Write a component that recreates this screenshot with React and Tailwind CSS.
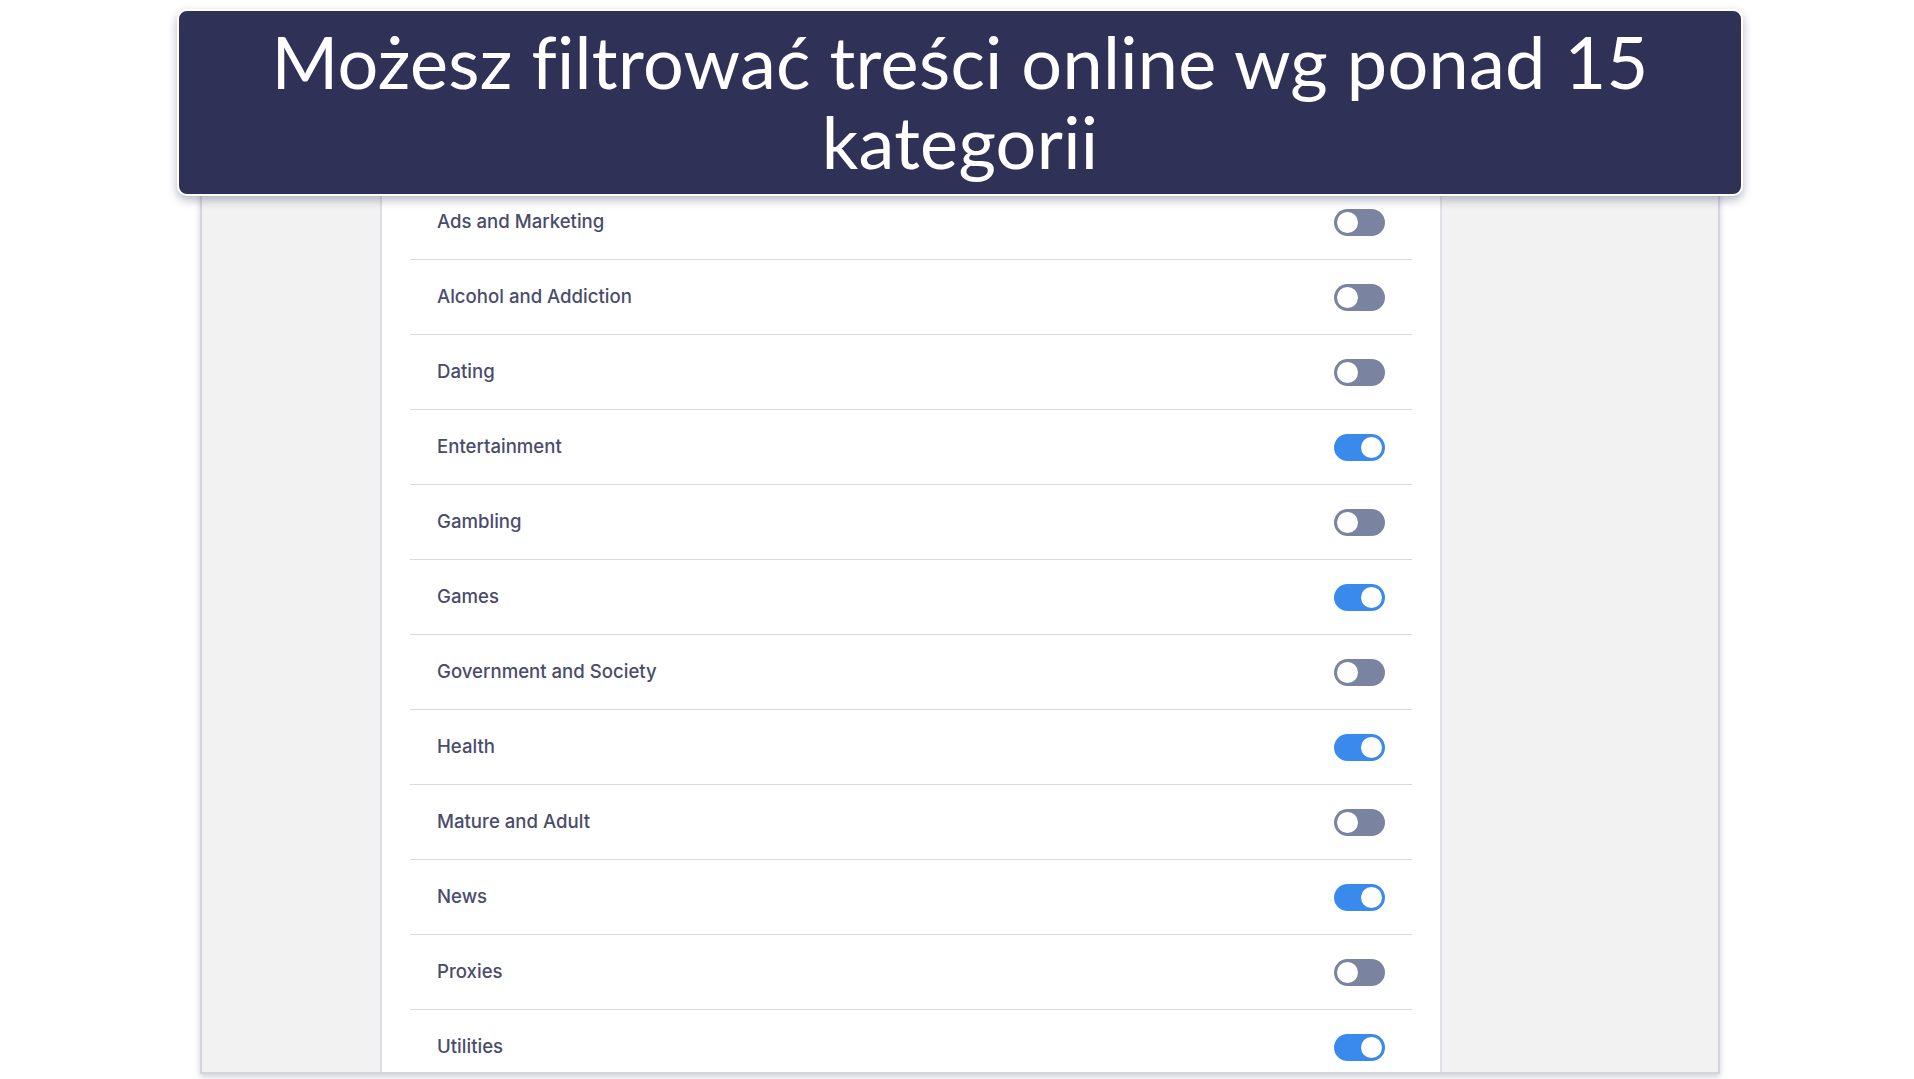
import React from "react";

const rows = [
  ["Ads and Marketing", false],
  ["Alcohol and Addiction", false],
  ["Dating", false],
  ["Entertainment", true],
  ["Gambling", false],
  ["Games", true],
  ["Government and Society", false],
  ["Health", true],
  ["Mature and Adult", false],
  ["News", true],
  ["Proxies", false],
  ["Utilities", true],
];

function Toggle({ on }) {
  return (
    <div
      className={
        "flex h-[27px] w-[51px] items-center rounded-full px-[3px] " +
        (on ? "justify-end bg-[#3a8aee]" : "justify-start bg-[#7a84a0]")
      }
    >
      <div className="h-[21px] w-[21px] rounded-full bg-white" />
    </div>
  );
}

export default function App() {
  return (
    <div className="relative h-[1079px] w-[1914px] overflow-hidden bg-white pt-[14px]">
      {/* embedded screenshot frame */}
      <div className="ml-[200px] flex h-[1060px] w-[1520px] border-2 border-[#d4d5dc] bg-[#f2f2f2] shadow-[0_3px_6px_rgba(120,125,150,0.35)]">
        <div className="w-[180px] shrink-0 border-r-2 border-[#dddde3] bg-[#f2f2f2]" />
        <div className="w-[1058px] shrink-0 bg-white px-[28px] pt-[169px]">
          {rows.map(([label, on]) => (
            <div
              key={label}
              className="flex h-[75px] items-center justify-between border-b border-[#d8d9df] pl-[27px] pr-[27px]"
            >
              <span
                className="text-[18.6px] font-medium text-[#4a4c6b]"
                style={{ fontFamily: "Inter, 'Noto Sans', sans-serif" }}
              >
                {label}
              </span>
              <Toggle on={on} />
            </div>
          ))}
        </div>
        <div className="flex-1 border-l-2 border-[#e0e0e6] bg-[#f2f2f2]" />
      </div>

      {/* overlay banner */}
      <div className="absolute left-[177px] top-[9px] flex h-[187px] w-[1566px] items-center justify-center rounded-[10px] border-2 border-white bg-[#303157] px-[40px] pb-[4px] shadow-[0_4px_10px_rgba(90,95,130,0.45)]">
        <h1
          className="text-center text-[72px] leading-[80px] font-normal tracking-[0.3px] text-white [font-feature-settings:'liga'_0]"
          style={{ fontFamily: "Lato, 'Noto Sans', sans-serif" }}
        >
          Możesz filtrować treści online wg ponad 15 kategorii
        </h1>
      </div>
    </div>
  );
}
